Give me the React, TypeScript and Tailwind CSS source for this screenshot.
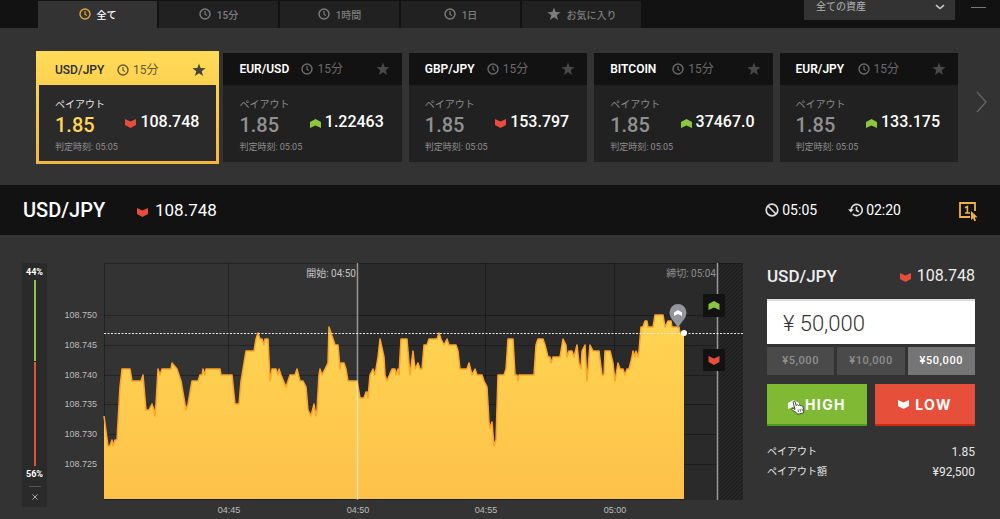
import clsx from 'clsx';

type Trend = 'up' | 'down';

const TABS = [
  { label: '全て', icon: 'clock' },
  { label: '15分', icon: 'clock' },
  { label: '1時間', icon: 'clock' },
  { label: '1日', icon: 'clock' },
  { label: 'お気に入り', icon: 'star' },
];

const ASSETS: { pair: string; price: string; trend: Trend }[] = [
  { pair: 'USD/JPY', price: '108.748', trend: 'down' },
  { pair: 'EUR/USD', price: '1.22463', trend: 'up' },
  { pair: 'GBP/JPY', price: '153.797', trend: 'down' },
  { pair: 'BITCOIN', price: '37467.0', trend: 'up' },
  { pair: 'EUR/JPY', price: '133.175', trend: 'up' },
];

const PRESETS = ['¥5,000', '¥10,000', '¥50,000'];

// [x, thousandths above 108]
const TICKS: [number, number][] = [
  [104, 733], [108, 728], [110, 728], [112, 729], [113, 728], [115, 729], [117, 729], [120, 738], [122, 741], [130, 741],
  [132, 739], [141, 739], [143, 740], [146, 734], [149, 734], [152, 735], [154, 734], [155, 733], [156, 735], [158, 741],
  [160, 740], [162, 741], [171, 741], [172, 742], [177, 741], [179, 740], [181, 739], [186, 734], [188, 735], [192, 739],
  [198, 739], [200, 740], [202, 740], [203, 741], [205, 740], [206, 741], [220, 741], [221, 740], [232, 740], [235, 735],
  [239, 735], [241, 739], [245, 743], [246, 744], [254, 744], [256, 746], [258, 747], [260, 746], [262, 746], [264, 745],
  [265, 746], [268, 746], [270, 739], [272, 741], [276, 741], [278, 740], [279, 741], [281, 740], [286, 738], [290, 740],
  [295, 740], [297, 741], [300, 739], [303, 739], [306, 738], [308, 734], [311, 733], [314, 735], [316, 733], [317, 734],
  [319, 740], [320, 741], [322, 740], [325, 741], [328, 742], [329, 748], [331, 747], [335, 745], [338, 745], [340, 741],
  [341, 742], [344, 742], [346, 741], [348, 739], [357, 739], [360, 736], [364, 736], [366, 737], [367, 737], [368, 736],
  [370, 740], [373, 741], [375, 740], [378, 743], [380, 746], [384, 743], [385, 740], [387, 739], [392, 741], [395, 741],
  [396, 740], [398, 741], [399, 740], [401, 746], [407, 746], [410, 740], [413, 744], [415, 741], [418, 742], [420, 741],
  [422, 741], [424, 745], [427, 745], [429, 746], [437, 746], [439, 747], [441, 746], [444, 745], [447, 746], [449, 745],
  [456, 745], [458, 744], [460, 741], [467, 741], [469, 742], [472, 740], [475, 741], [477, 740], [482, 740], [484, 739],
  [487, 738], [489, 732], [490, 731], [492, 732], [494, 728], [496, 729], [498, 740], [504, 740], [506, 741], [508, 746],
  [513, 746], [515, 740], [517, 740], [518, 739], [519, 740], [534, 740], [536, 745], [538, 746], [543, 746], [545, 745],
  [548, 743], [550, 743], [551, 742], [553, 743], [560, 743], [563, 746], [566, 745], [567, 743], [569, 744], [572, 744],
  [574, 743], [577, 745], [579, 742], [581, 741], [582, 744], [585, 745], [587, 739], [590, 745], [593, 744], [599, 744],
  [602, 740], [604, 740], [605, 744], [610, 744], [613, 742], [615, 739], [618, 742], [620, 741], [623, 741], [625, 740],
  [627, 741], [629, 741], [632, 743], [633, 744], [635, 743], [636, 744], [638, 743], [639, 744], [641, 748], [643, 748],
  [645, 749], [647, 749], [648, 748], [653, 748], [655, 750], [663, 750], [665, 748], [668, 749], [671, 749], [672, 748],
  [679, 748], [680, 747], [684, 747],
];

const Y_LABELS = [750, 745, 740, 735, 730, 725];
const X_LABELS = [
  { x: 229, label: '04:45' },
  { x: 358, label: '04:50' },
  { x: 486, label: '04:55' },
  { x: 615, label: '05:00' },
];

const toY = (v: number) => Math.round(52 + (750 - v) * 5.96);

const UP = 'M0 3 5.5 0 11 3V9L5.5 6.5 0 9Z';
const DOWN = 'M0 0 5.5 2.5 11 0V6L5.5 9 0 6Z';

function TrendIcon({ trend, className }: { trend: Trend; className?: string }) {
  return (
    <svg viewBox="0 0 11 9" className={clsx('h-[9px] w-[11px] shrink-0', className)} aria-hidden>
      <path d={trend === 'up' ? UP : DOWN} fill="currentColor" />
    </svg>
  );
}

function ClockIcon({ className }: { className?: string }) {
  return (
    <svg viewBox="0 0 12 12" className={clsx('size-3 shrink-0', className)} fill="none" stroke="currentColor" aria-hidden>
      <circle cx="6" cy="6" r="5" strokeWidth="1.4" />
      <path d="M6 3v3.2l1.8 1.4" strokeWidth="1.2" />
    </svg>
  );
}

function StarIcon({ className }: { className?: string }) {
  return (
    <svg viewBox="0 0 14 14" className={clsx('shrink-0', className)} fill="currentColor" aria-hidden>
      <path d="M7 .5l1.7 4.6 4.9.2-3.9 3 1.4 4.8L7 10.3l-4.1 2.8 1.4-4.8-3.9-3 4.9-.2z" />
    </svg>
  );
}

function TopBar() {
  return (
    <header className="flex h-7 items-end overflow-hidden bg-[#121212] pr-3 pl-[38px]">
      <nav className="flex h-[27px] gap-0.5">
        {TABS.map((tab, i) => (
          <button
            key={tab.label}
            className={clsx(
              'flex w-[119px] items-center justify-center gap-1.5 pt-0.5 text-[10px] font-medium',
              i === 0 ? 'bg-[#333] text-white' : 'bg-[#212121] text-[#7d7d7d]',
            )}
          >
            {tab.icon === 'clock' ? (
              <ClockIcon className={clsx('mb-1', i === 0 && 'text-[#e0a63c]')} />
            ) : (
              <StarIcon className="mb-1 size-3.5" />
            )}
            {tab.label}
          </button>
        ))}
      </nav>
      <div className="relative mb-2 ml-auto">
        <select aria-label="資産" className="block h-7 w-[151px] appearance-none bg-[#333] px-3 text-[10px] text-[#b4b4b4]">
          <option>全ての資産</option>
        </select>
        <svg viewBox="0 0 10 6" className="pointer-events-none absolute top-3 right-2.5 h-1.5 w-2.5" fill="none" stroke="#ccc" strokeWidth="1.5" aria-hidden>
          <path d="M1 1.200 5 4.500 9 1.200" />
        </svg>
      </div>
      <button aria-label="閉じる" className="mb-4 ml-[13px] flex h-4 w-5 items-center justify-center">
        <span className="mt-1.5 h-px w-[15px] bg-[#777]" />
      </button>
    </header>
  );
}

function AssetCard({ pair, price, trend, selected }: { pair: string; price: string; trend: Trend; selected: boolean }) {
  return (
    <article
      className={clsx(
        'flex flex-col',
        selected ? '-m-0.5 -mr-[3px] bg-linear-to-b from-[#ffdc58] to-[#f4b63f] p-[3px]' : '',
      )}
    >
      <div
        className={clsx(
          'flex items-center',
          selected ? 'h-[31px] px-4 text-[#2b2b2b]' : 'h-8 bg-[#121212] pr-[18px] pl-4 text-white',
        )}
      >
        <h3 className={clsx('w-[62px] text-[12px]', selected ? 'font-medium' : 'font-semibold')}>{pair}</h3>
        <ClockIcon className={selected ? 'text-[#635a38]' : 'text-[#6a6a6a]'} />
        <span className={clsx('ml-1 text-[12px]', selected ? 'text-[#635a38]' : 'text-[#6a6a6a]')}>15分</span>
        <button aria-label="お気に入り" className={clsx('-mr-1.5 ml-auto', selected ? 'text-[#474338]' : 'text-[#484848]')}>
          <StarIcon className="size-3.5" />
        </button>
      </div>
      <div className={clsx('flex-1 pt-3', selected ? 'bg-[#2a2a2a] pr-[17px] pl-4' : 'bg-[#212121] pr-[18px] pl-4')}>
        <p className={clsx('text-[10px] leading-4', selected ? 'text-[#e5e5e5]' : 'text-[#8a8a8a]')}>ペイアウト</p>
        <div className="flex items-center justify-between">
          <span className={clsx('text-[20px] leading-6 font-medium', selected ? 'text-[#ffd755]' : 'text-[#909090]')}>1.85</span>
          <span className="flex items-center gap-1 pb-1.5 text-[16px] leading-4 font-medium text-white">
            <TrendIcon trend={trend} className={clsx('mt-0.5', trend === 'up' ? 'text-[#8cc63f]' : 'text-[#e74c3c]')} />
            {price}
          </span>
        </div>
        <p className="pt-1 text-[9px] leading-3 text-[#8e8e8e]">判定時刻: 05:05</p>
      </div>
    </article>
  );
}

function InfoBar() {
  return (
    <div className="flex h-[50px] items-center bg-[#121212] pr-[21px] pl-[23px] text-white">
      <h1 className="w-[114px] text-[20px] font-medium">USD/JPY</h1>
      <TrendIcon trend="down" className="mt-1 text-[#e74c3c]" />
      <span className="ml-[7px] pt-0.5 text-[17px]">108.748</span>
      <span className="ml-auto flex items-center gap-[3px] text-[14px]">
        <svg viewBox="0 0 14 14" className="size-3.5" fill="none" stroke="#ddd" strokeWidth="1.7" aria-hidden>
          <circle cx="7" cy="7" r="5.8" />
          <path d="M3 3l8 8" />
        </svg>
        05:05
      </span>
      <span className="ml-[31px] flex items-center gap-[3px] text-[14px]">
        <svg viewBox="0 0 15 14" className="h-3.5 w-[15px]" fill="none" stroke="#ddd" strokeWidth="1.6" aria-hidden>
          <path d="M3 7a5.6 5.6 0 1 1 1.8 4.1M8.5 3.8V7.3l2.3 1.4" />
          <path d="M0 6.3h5.8L2.9 9.6z" fill="#ddd" stroke="none" />
        </svg>
        02:20
      </span>
      <button aria-label="ワンクリック注文" className="ml-[58px] pt-0.5">
        <svg viewBox="0 0 20 21" className="h-[21px] w-5" fill="none" aria-hidden>
          <path d="M16 10V2H1v14h10" stroke="#f2b13d" strokeWidth="1.8" />
          <path d="M6 6.8 8.4 5.6V12M6 12h5" stroke="#f2b13d" strokeWidth="1.6" />
          <path d="M12 10v9l2-1.8 1.4 3 1.7-.8-1.4-2.9 2.9-.2z" fill="#f2b13d" />
        </svg>
      </button>
    </div>
  );
}

function Sentiment() {
  return (
    <div className="flex h-[244px] w-[25px] shrink-0 flex-col items-center bg-[#2a2a2a] pt-[3px] text-[9px] leading-3 font-bold text-white">
      44%
      <span className="mt-0.5 w-0.5 flex-[44] bg-[#8cc152]" />
      <span className="mt-px w-0.5 flex-[56] bg-[#e0553a]" />
      <span className="mt-0.5">56%</span>
      <span className="mt-1.5 h-px w-3 bg-[#555]" />
      <button aria-label="閉じる" className="flex h-5 w-full items-center justify-center">
        <svg viewBox="0 0 6 6" className="size-1.5" stroke="#aaa" aria-hidden>
          <path d="M.5.5l5 5M5.5.5l-5 5" />
        </svg>
      </button>
    </div>
  );
}

function PriceChart() {
  const line = TICKS.map(([x, v]) => `${x} ${toY(v)}`).join('L');
  return (
    <svg viewBox="62 0 683 256" className="h-auto min-w-0 flex-1" role="img" aria-label="USD/JPY チャート">
      <defs>
        <linearGradient id="area" x1="0" y1="0" x2="0" y2="1">
          <stop offset="0" stopColor="#ffd552" />
          <stop offset="1" stopColor="#fdc14a" />
        </linearGradient>
        <pattern id="hatch" width="4" height="4" patternUnits="userSpaceOnUse">
          <rect width="4" height="4" fill="#292929" />
          <path d="M-1 1l2-2M0 4l4-4M3 5l2-2" stroke="#191919" strokeWidth="1.2" />
        </pattern>
      </defs>

      <rect x="357" y="0" width="361" height="237" fill="#2a2a2a" />
      <rect x="718" y="0" width="25" height="237" fill="url(#hatch)" />
      <g stroke="#000" strokeOpacity="0.3">
        <path d="M104.5 237V.5H743" fill="none" />
        {Y_LABELS.map(v => <path key={v} d={`M104 ${toY(v) + 0.5}H718`} />)}
        {[229, 486, 615].map(x => <path key={x} d={`M${x - 0.5} 0V237`} />)}
      </g>

      <path d={`M104 236L${line}L684 236Z`} fill="url(#area)" />
      <path d={`M${line}`} fill="none" stroke="#ffa42b" strokeWidth="1.5" strokeLinejoin="round" />
      <path d="M104 236.5H684" stroke="#1b2129" />
      <path d="M357.5 0V237" stroke="#fff" strokeOpacity="0.5" strokeWidth="1.5" />
      <path d="M717.5 0V237" stroke="#9a9a9a" strokeWidth="1.5" />
      <path d="M104 70.5H743" stroke="#e8e8e8" strokeDasharray="2 1.5" />

      <path d="M678 65C676 60 669.500 56 669.500 49.500a8.500 8.500 0 0 1 17 0C686.500 56 680 60 678 65Z" fill="#93959c" />
      <path d="M674 49.500 678 47l4 2.500V53l-4-2-4 2Z" fill="#fff" />
      <circle cx="684" cy="70" r="3" fill="#fff" />

      <rect x="703" y="31" width="22" height="23" fill="#121212" />
      <path d={UP} transform="translate(708.500 38)" fill="#8cc63f" />
      <rect x="703" y="86" width="22" height="22" fill="#121212" />
      <path d={DOWN} transform="translate(708.500 93)" fill="#e74c3c" />

      <g fill="#c4c4c4" fontSize="10">
        <text x="356" y="14" textAnchor="end">開始: 04:50</text>
        <text x="716" y="14" textAnchor="end" fill="#8e8e8e">締切: 05:04</text>
      </g>
      <g fill="#bdbdbd" fontSize="9" className="font-['Liberation_Sans']">
        {Y_LABELS.map(v => <text key={v} x="97" y={toY(v) + 3} textAnchor="end">108.{v}</text>)}
        {X_LABELS.map(({ x, label }) => <text key={label} x={x} y="250" textAnchor="middle">{label}</text>)}
      </g>
    </svg>
  );
}

function OrderPanel() {
  return (
    <form className="w-[208px] shrink-0 text-white" onSubmit={e => e.preventDefault()}>
      <div className="flex h-9 items-start justify-between">
        <h2 className="text-[17px] leading-[26px] font-medium text-[#eee]">USD/JPY</h2>
        <span className="flex items-center gap-1.5 text-[16px] leading-[26px] text-[#eee]">
          <TrendIcon trend="down" className="mt-0.5 text-[#e74c3c]" />
          108.748
        </span>
      </div>
      <input
        aria-label="金額"
        defaultValue="¥ 50,000"
        className="block h-[45px] w-full border-t-2 border-[#ddd] bg-white px-4 pt-0.5 text-[22px] font-light text-[#333]"
      />
      <div className="mt-[3px] grid grid-cols-3 gap-[3px]">
        {PRESETS.map((amount, i) => (
          <button
            key={amount}
            type="button"
            className={clsx(
              'h-7 text-[11px] font-medium tracking-wider',
              i === 2 ? 'bg-[#757575] text-white' : 'bg-[#4a4a4a] text-[#8f8f8f]',
            )}
          >
            {amount}
          </button>
        ))}
      </div>
      <div className="mt-[9px] grid grid-cols-2 gap-2 font-['Inter'] text-[14px] font-bold tracking-widest">
        <button type="button" className="relative flex h-[42px] items-center justify-center gap-1.5 border-b-2 border-[#4f9a1c] bg-[#80ba35]">
          <TrendIcon trend="up" />
          HIGH
          <svg viewBox="0 0 14 15" className="absolute top-4 left-6 h-[15px] w-3.5" aria-hidden>
            <path
              d="M4 9.500 2.200 2.200C2 1 3.700.6 4.100 1.800L5.200 5.500C5.500 4.500 7.200 4.500 7.500 5.500 8 4.700 9.400 4.900 9.600 5.900 10.400 5.300 11.600 5.700 11.900 6.600L12.700 9.700 12.600 12.900 6.500 14.300 5.500 12.700 1.200 10C.2 9.200 1.200 8 2.300 8.500Z"
              fill="#fff"
              stroke="#222"
              strokeWidth="0.8"
              strokeLinejoin="round"
            />
            <path d="M7 9.500l.5 2.500M9 9l.5 2.500M11 8.700l.4 2.300" stroke="#222" strokeWidth="0.7" />
          </svg>
        </button>
        <button type="button" className="flex h-[42px] items-center justify-center gap-1.5 border-b-2 border-[#d3280f] bg-[#e6503b]">
          <TrendIcon trend="down" />
          LOW
        </button>
      </div>
      <dl className="mt-4 grid grid-cols-[1fr_auto] text-[12px] leading-5 text-[#e6e6e6]">
        <dt className="text-[10px] leading-5">ペイアウト</dt>
        <dd className="text-right">1.85</dd>
        <dt className="text-[10px] leading-5">ペイアウト額</dt>
        <dd className="text-right">¥92,500</dd>
      </dl>
    </form>
  );
}

export default function App() {
  return (
    <div className="min-h-screen bg-[#333] font-['Roboto','Noto_Sans_CJK_JP',sans-serif]">
      <TopBar />
      <section className="flex items-start pt-[25px] pb-[23px] pl-[38px]">
        <div className="grid h-[109px] flex-1 grid-cols-5 gap-[7px]">
          {ASSETS.map((asset, i) => <AssetCard key={asset.pair} {...asset} selected={i === 0} />)}
        </div>
        <button aria-label="次へ" className="flex h-[98px] w-[42px] items-center justify-center pl-1">
          <svg viewBox="0 0 11 22" className="h-[22px] w-[11px]" fill="none" stroke="#666" strokeWidth="1.3" aria-hidden>
            <path d="M1 1l9 10-9 10" />
          </svg>
        </button>
      </section>
      <InfoBar />
      <main className="flex pt-7 pr-[25px] pl-[22px]">
        <Sentiment />
        <div className="ml-[15px] flex min-w-0 flex-1 items-start">
          <PriceChart />
        </div>
        <div className="ml-[22px]">
          <OrderPanel />
        </div>
      </main>
    </div>
  );
}
